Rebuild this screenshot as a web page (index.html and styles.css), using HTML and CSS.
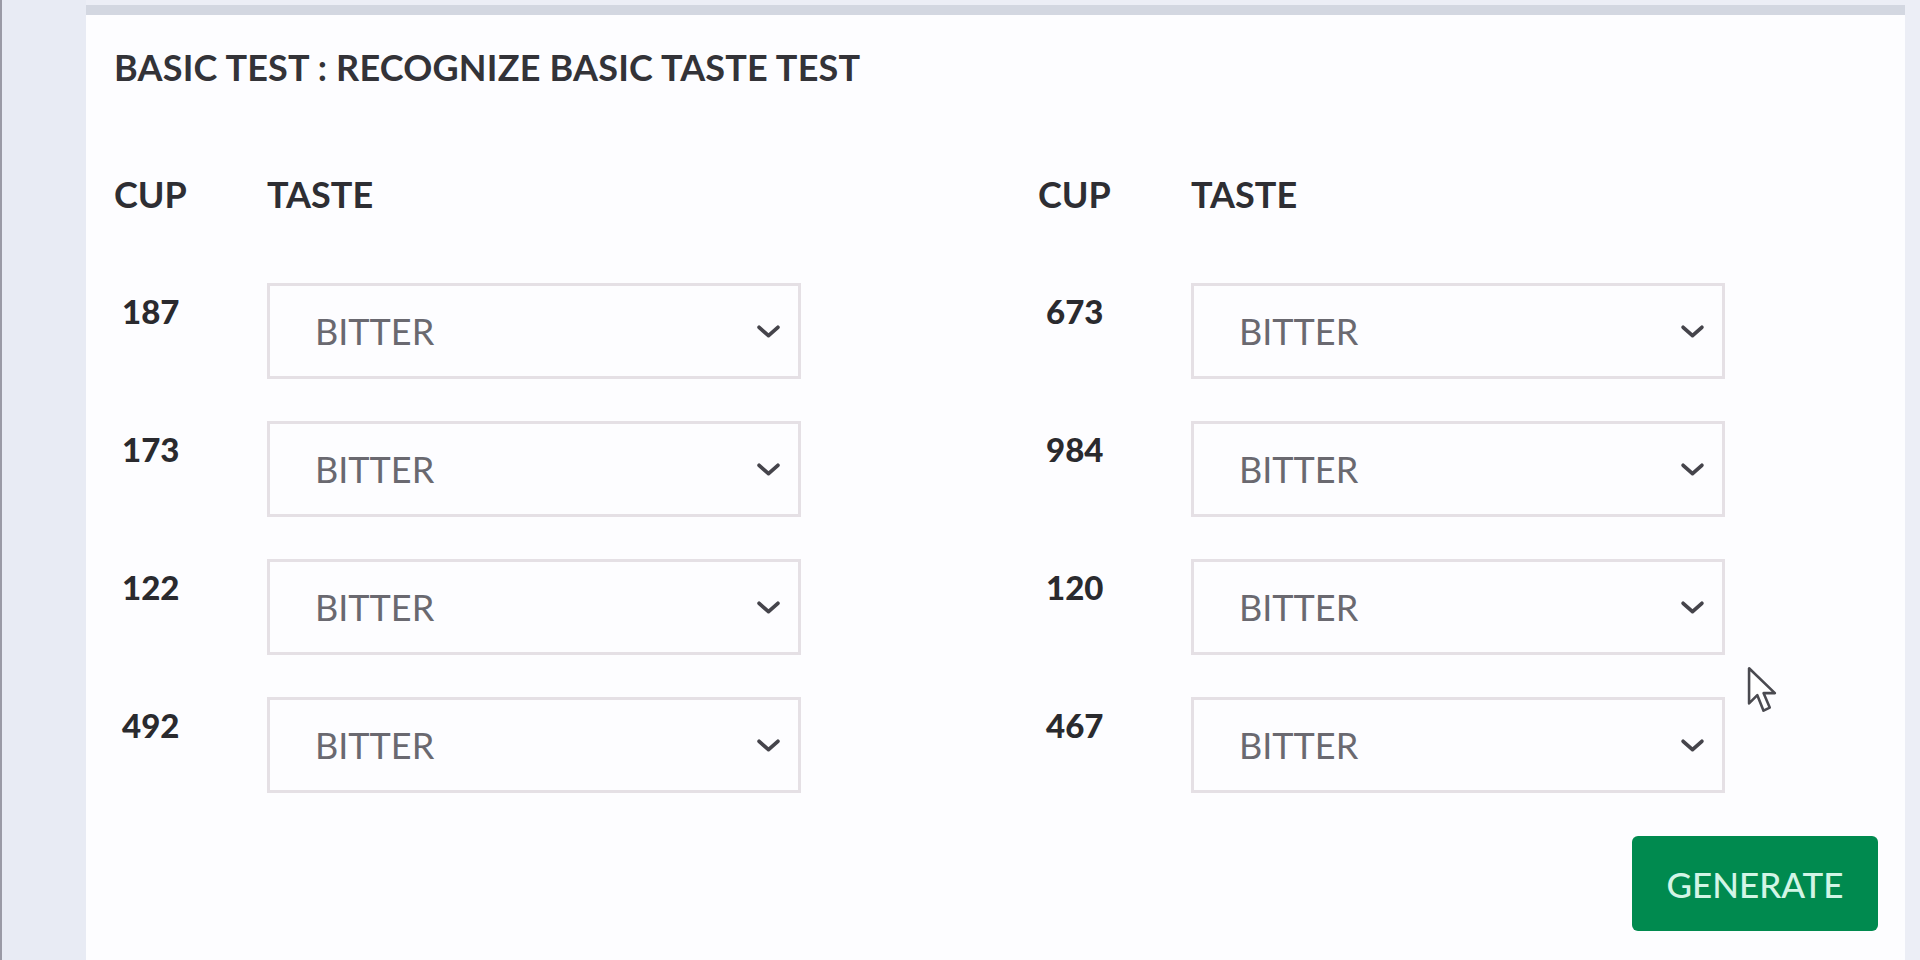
FILE: index.html
```html
<!DOCTYPE html>
<html>
<head>
<meta charset="utf-8">
<link rel="stylesheet" href="styles.css">
</head>
<body>
<div class="page">
  <div class="side"></div>
  <main class="card">
    <h1 class="title">BASIC TEST : RECOGNIZE BASIC TASTE TEST</h1>
    <div class="cols">
      <section class="col">
        <div class="row head"><span class="cup">CUP</span><span class="taste">TASTE</span></div>
        <div class="row"><span class="num">187</span><div class="select"><span>BITTER</span><svg class="chev" viewBox="0 0 24 14"><path d="M3 3 L12 11 L21 3"/></svg></div></div>
        <div class="row"><span class="num">173</span><div class="select"><span>BITTER</span><svg class="chev" viewBox="0 0 24 14"><path d="M3 3 L12 11 L21 3"/></svg></div></div>
        <div class="row"><span class="num">122</span><div class="select"><span>BITTER</span><svg class="chev" viewBox="0 0 24 14"><path d="M3 3 L12 11 L21 3"/></svg></div></div>
        <div class="row"><span class="num">492</span><div class="select"><span>BITTER</span><svg class="chev" viewBox="0 0 24 14"><path d="M3 3 L12 11 L21 3"/></svg></div></div>
      </section>
      <section class="col">
        <div class="row head"><span class="cup">CUP</span><span class="taste">TASTE</span></div>
        <div class="row"><span class="num">673</span><div class="select"><span>BITTER</span><svg class="chev" viewBox="0 0 24 14"><path d="M3 3 L12 11 L21 3"/></svg></div></div>
        <div class="row"><span class="num">984</span><div class="select"><span>BITTER</span><svg class="chev" viewBox="0 0 24 14"><path d="M3 3 L12 11 L21 3"/></svg></div></div>
        <div class="row"><span class="num">120</span><div class="select"><span>BITTER</span><svg class="chev" viewBox="0 0 24 14"><path d="M3 3 L12 11 L21 3"/></svg></div></div>
        <div class="row"><span class="num">467</span><div class="select"><span>BITTER</span><svg class="chev" viewBox="0 0 24 14"><path d="M3 3 L12 11 L21 3"/></svg></div></div>
      </section>
    </div>
    <div class="actions"><button class="btn">GENERATE</button></div>
  </main>
  <div class="rside"></div>
</div>
<svg class="cursor" viewBox="0 0 30 46"><path d="M2 2 L2 36 L10 28 L16 43 L22 40 L16 26 L27 26 Z"/></svg>
</body>
</html>
```
FILE: styles.css
```css
html, body { margin: 0; padding: 0; }
body {
  background: #eceef6;
  font-family: "Lato", "Liberation Sans", sans-serif;
  width: 1920px;
  height: 960px;
  overflow: hidden;
  position: relative;
}
.page { display: flex; height: 960px; }
.side {
  width: 84px;
  border-left: 2px solid #9a9aa6;
  background: #e8ebf4;
  flex: none;
}
.card {
  flex: none;
  width: 1819px;
  margin-top: 5px;
  border-top: 10px solid #d3d7e1;
  background: #fdfdff;
  padding: 0 27px 0 28px;
  box-sizing: border-box;
}
.rside { flex: 1; background: #eceef6; }
.title {
  margin: 32px 0 0 0;
  font-size: 36px;
  font-weight: 700;
  letter-spacing: 0.2px;
  color: #333338;
  line-height: 40px;
}
.cols { display: grid; grid-template-columns: 924px 1fr; margin-top: 87px; }
.row { display: grid; grid-template-columns: 153px 534px; align-items: start; }
.row + .row { margin-top: 42px; }
.head { height: 40px; line-height: 40px; font-size: 36px; font-weight: 700; color: #2e2e33; }
.head + .row { margin-top: 69px; }
.num { font-size: 33px; font-weight: 900; color: #2a2a2e; padding: 8px 0 0 8px; line-height: 40px; }
.select {
  height: 96px;
  box-sizing: border-box;
  border: 3px solid #e5e0e5;
  background: #fdfdff;
  display: flex;
  align-items: center;
  justify-content: space-between;
  padding: 0 17px 0 45px;
  font-size: 36px;
  color: #6a6970;
}
.chev { width: 25px; height: 15px; fill: none; stroke: #45444b; stroke-width: 3.6; stroke-linecap: round; stroke-linejoin: round; }
.actions { display: flex; justify-content: flex-end; margin-top: 43px; }
.btn {
  width: 246px;
  height: 95px;
  border: none;
  border-radius: 6px;
  background: #008a4f;
  color: #d2f5e6;
  font-family: "Lato", "Liberation Sans", sans-serif;
  font-size: 35px;
  font-weight: 500;
  padding: 0;
}
.cursor {
  position: absolute;
  left: 1747px;
  top: 666px;
  width: 31px;
  height: 48px;
  fill: #ffffff;
  stroke: #4a4a50;
  stroke-width: 2.5;
  stroke-linejoin: round;
}
```
